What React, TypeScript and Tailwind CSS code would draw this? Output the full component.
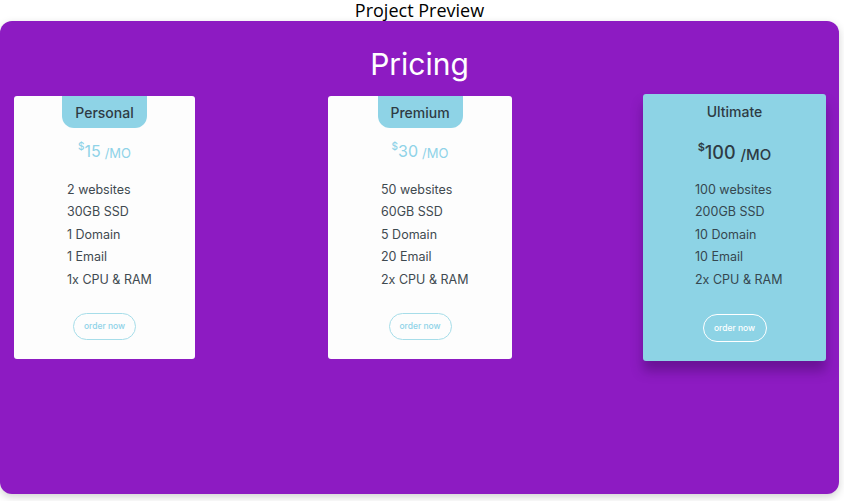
import React from "react";

type Plan = {
  name: string;
  price: string;
  width: string;
  features: string[];
  featured?: boolean;
};

const plans: Plan[] = [
  {
    name: "Personal",
    price: "15",
    width: "w-[181px]",
    features: ["2 websites", "30GB SSD", "1 Domain", "1 Email", "1x CPU & RAM"],
  },
  {
    name: "Premium",
    price: "30",
    width: "w-[184px] ml-[133px]",
    features: ["50 websites", "60GB SSD", "5 Domain", "20 Email", "2x CPU & RAM"],
  },
  {
    name: "Ultimate",
    price: "100",
    width: "w-[183px] ml-[131px]",
    features: ["100 websites", "200GB SSD", "10 Domain", "10 Email", "2x CPU & RAM"],
    featured: true,
  },
];

const Card = ({ plan }: { plan: Plan }) => {
  // featured card is the hovered one: blue bg, dark text, white button
  if (plan.featured) {
    return (
      <div className={`${plan.width} h-[267px] -mt-[2px] bg-[#8dd3e5] rounded-[3px] shadow-[0_10px_12px_rgba(40,0,70,0.35)] flex flex-col items-center`}>
        <div className="h-[34px] flex items-center justify-center text-[14px] font-medium text-[#2e3b44]">
          {plan.name}
        </div>
        <div className="mt-[10px] h-[28px] flex items-center text-[#2e3b44]">
          <span className="text-[11px] font-semibold -mt-[10px]">$</span>
          <span className="text-[18px] font-medium">{plan.price}</span>
          <span className="text-[15px] font-medium ml-[5px] mt-[6px]">/MO</span>
        </div>
        <ul className="self-stretch pl-[52px] mt-[13px] text-[12.5px] text-[#35474f]">
          {plan.features.map((f, i) => (
            <li key={i} className="h-[22.4px] leading-[22.4px]">
              {f}
            </li>
          ))}
        </ul>
        <button className="mt-[23px] w-[64px] h-[28px] rounded-full border-[1.5px] border-white text-white text-[8.5px] font-medium">
          order now
        </button>
      </div>
    );
  }

  return (
    <div className={`${plan.width} h-[263px] bg-[#fdfdfd] rounded-[3px] flex flex-col items-center`}>
      <div className="w-[85px] h-[32px] bg-[#8ed3e6] rounded-b-[12px] flex items-center justify-center text-[14px] font-medium text-[#2e3b44]">
        {plan.name}
      </div>
      <div className="mt-[10px] h-[26px] flex items-center text-[#8fd3e8]">
        <span className="text-[10px] font-medium -mt-[10px]">$</span>
        <span className="text-[16px]">{plan.price}</span>
        <span className="text-[13px] ml-[4px] mt-[6px]">/MO</span>
      </div>
      <ul className="self-stretch pl-[53px] mt-[15px] text-[12.5px] text-[#3f4a50]">
        {plan.features.map((f, i) => (
          <li key={i} className="h-[22.4px] leading-[22.4px]">
            {f}
          </li>
        ))}
      </ul>
      <button className="mt-[22px] w-[63px] h-[27px] rounded-full border-[1.5px] border-[#a6dde9] text-[#8fd3e8] text-[8.5px] font-medium">
        order now
      </button>
    </div>
  );
};

export default function App() {
  return (
    <div className="w-[844px] h-[501px] bg-white overflow-hidden">
      <div className="w-[839px] h-[21px] flex justify-center items-start">
        <span
          className="text-[18px] leading-[21px] text-black"
          style={{ fontFamily: '"Open Sans", sans-serif' }}
        >
          Project Preview
        </span>
      </div>
      <div
        className="w-[839px] h-[473px] bg-[#8d1bc2] rounded-[12px] shadow-[0_3px_8px_rgba(0,0,0,0.18)] flex flex-col"
        style={{ fontFamily: 'Inter, "Noto Sans", sans-serif' }}
      >
        <h1 className="mt-[24px] h-[39px] text-center text-white text-[30px] leading-[39px] font-normal">
          Pricing
        </h1>
        <div className="mt-[12px] pl-[14px] flex items-start">
          {plans.map((p) => (
            <Card key={p.name} plan={p} />
          ))}
        </div>
      </div>
    </div>
  );
}
